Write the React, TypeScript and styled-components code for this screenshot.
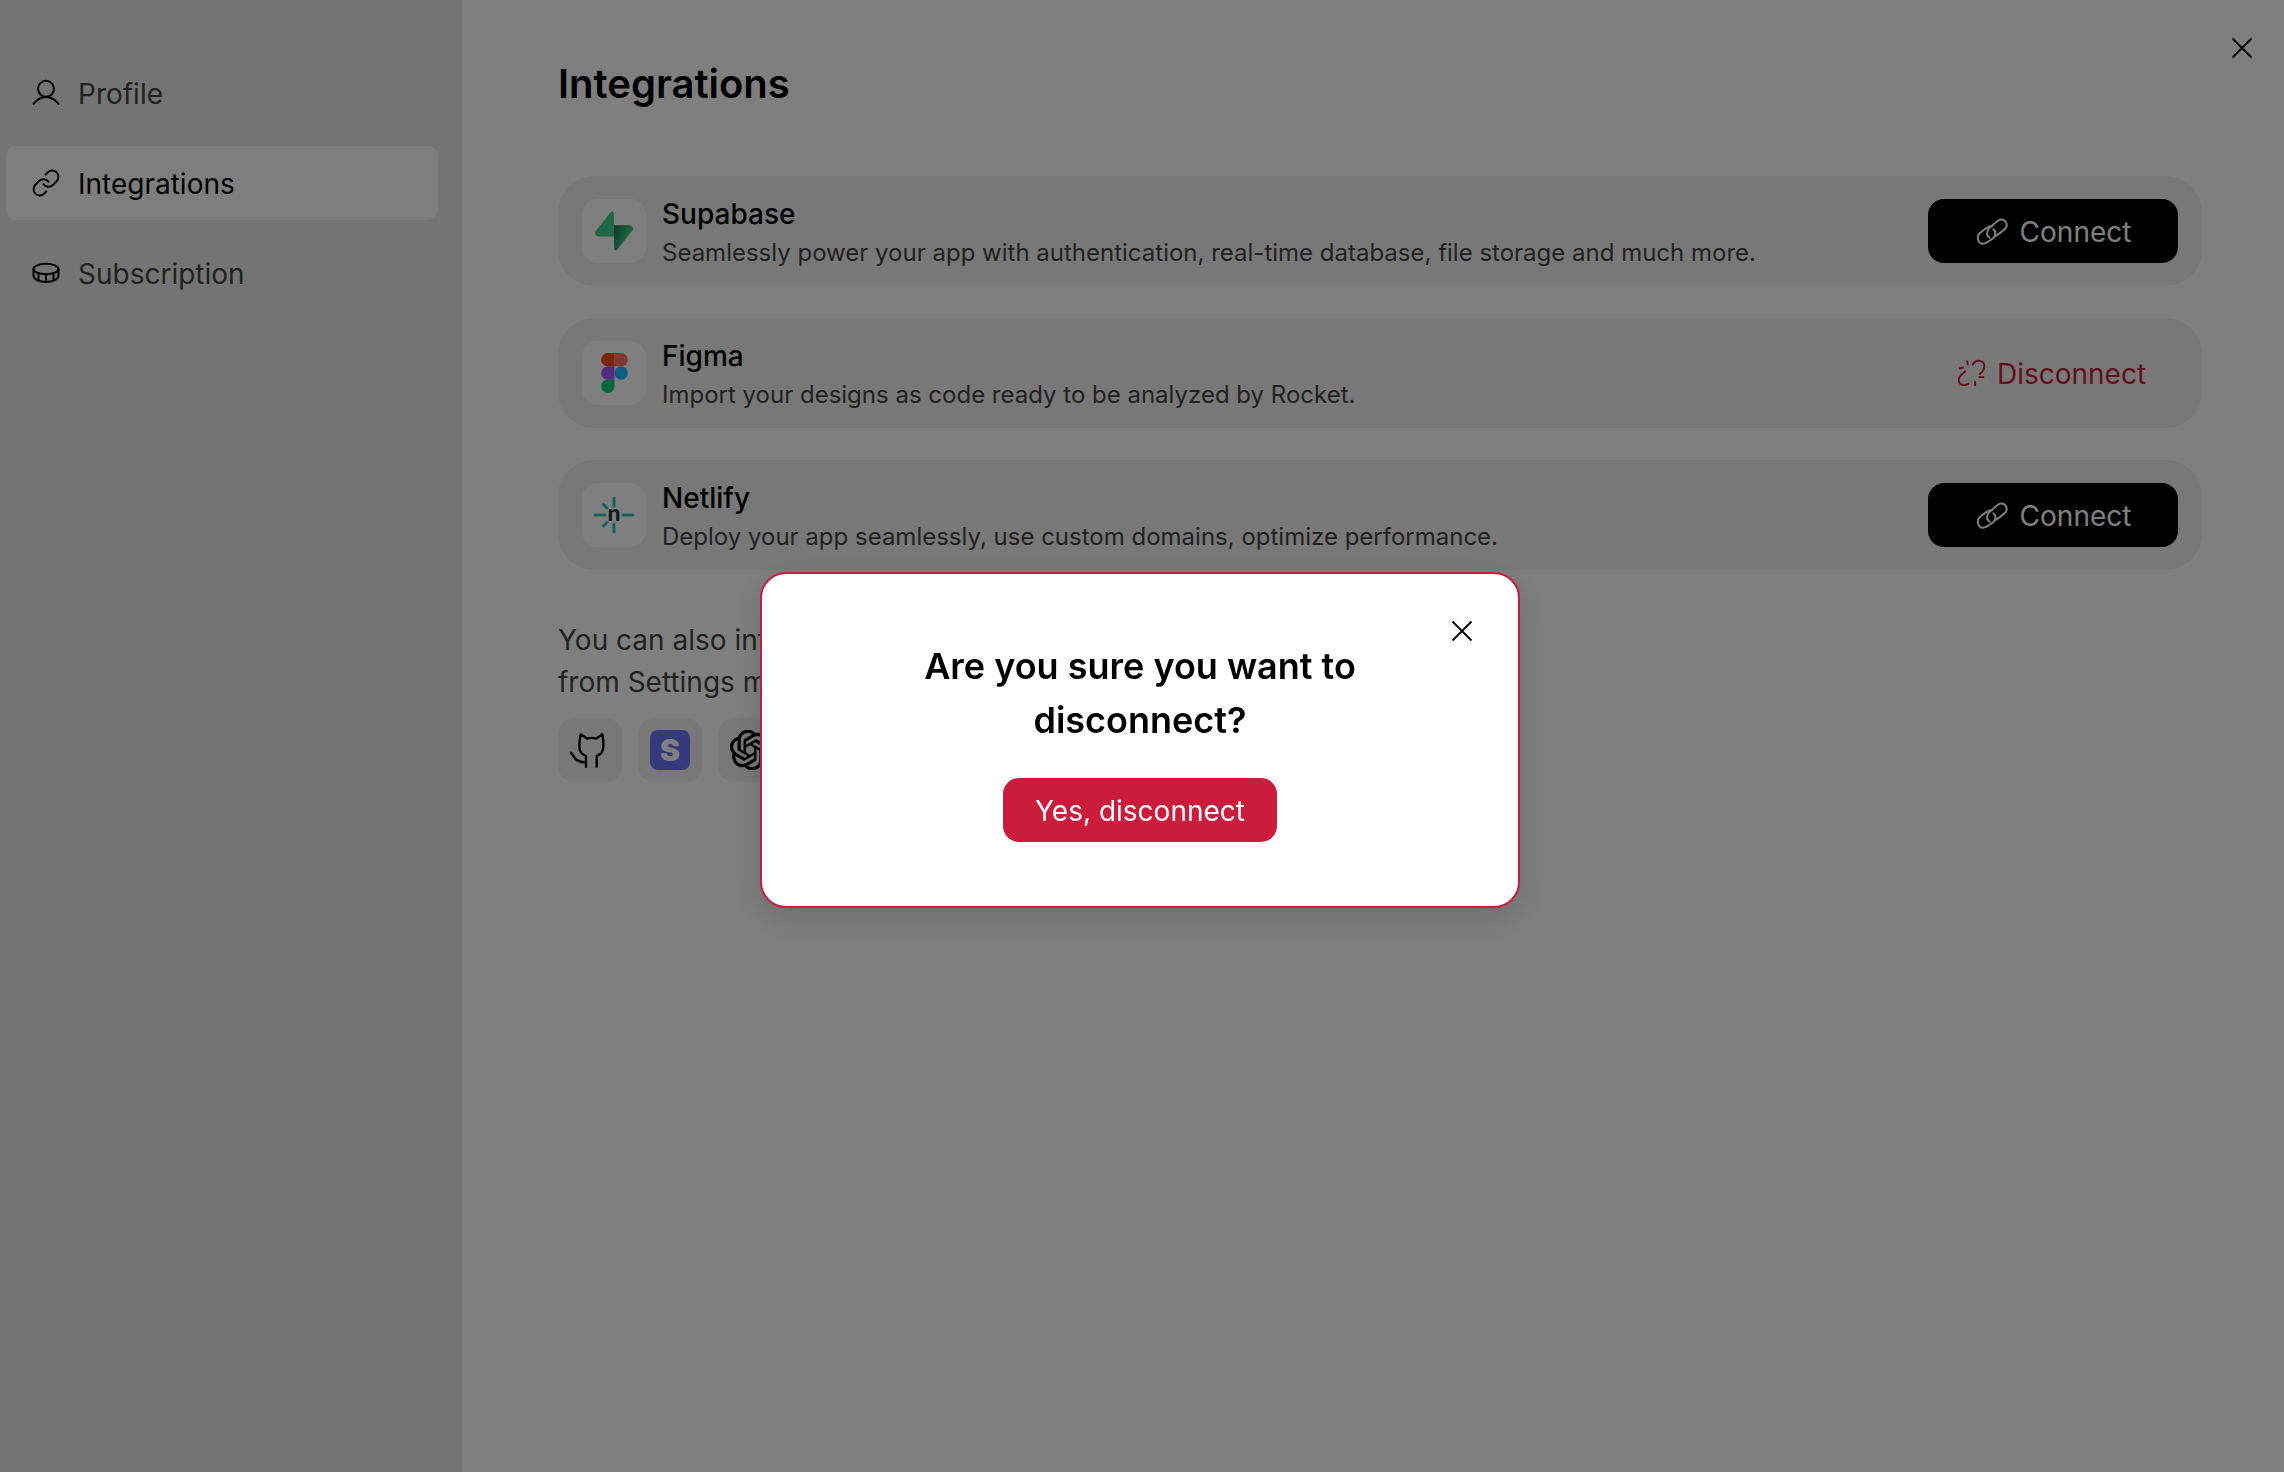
import React from 'react';
import styled, { createGlobalStyle } from 'styled-components';
import { SiOpenai } from 'react-icons/si';

const GlobalStyle = createGlobalStyle`
  html, body {
    margin: 0;
    padding: 0;
    background: #ffffff;
    font-family: Inter, "Liberation Sans", sans-serif;
  }
  * { box-sizing: border-box; }
`;

const Page = styled.div`
  display: flex;
  min-height: 100vh;
  background: #ffffff;
`;

const Sidebar = styled.aside`
  width: 462px;
  flex-shrink: 0;
  background: #e9e9e9;
  padding: 56px 24px 0 6px;
  display: flex;
  flex-direction: column;
  gap: 16px;
`;

const NavItem = styled.div<{ $active?: boolean }>`
  height: 74px;
  border-radius: 10px;
  padding-left: 25px;
  display: flex;
  align-items: center;
  gap: 17px;
  font-size: 28px;
  color: ${p => (p.$active ? '#000000' : '#454545')};
  background: ${p => (p.$active ? '#fdfdfd' : 'transparent')};
`;

const NavLabel = styled.span`
  padding-top: 1px;
`;

const NavIcon = styled.svg<{ $weight?: number }>`
  width: 30px;
  height: 30px;
  flex-shrink: 0;
  fill: none;
  stroke: #000000;
  stroke-width: ${p => p.$weight || 2};
  stroke-linecap: round;
  stroke-linejoin: round;
`;

const Main = styled.main`
  flex: 1;
  padding: 60px 82px 0 96px;
`;

const Title = styled.h1`
  margin: 0 0 68px;
  font-size: 40px;
  line-height: 48px;
  font-weight: 600;
  color: #000000;
`;

const CardList = styled.div`
  display: flex;
  flex-direction: column;
  gap: 32px;
`;

const Card = styled.div`
  height: 110px;
  border-radius: 36px;
  background: #f0f0f0;
  padding: 0 24px;
  display: flex;
  align-items: center;
  gap: 16px;
`;

const Tile = styled.div<{ $bg?: string }>`
  width: 64px;
  height: 64px;
  flex-shrink: 0;
  border-radius: 16px;
  background: ${p => p.$bg || '#ffffff'};
  display: flex;
  align-items: center;
  justify-content: center;
  overflow: hidden;
`;

const CardText = styled.div`
  flex: 1;
  min-width: 0;
  padding-top: 1px;
`;

const CardName = styled.div`
  font-size: 28px;
  line-height: 42px;
  font-weight: 500;
  color: #000000;
`;

const CardDesc = styled.div`
  font-size: 24px;
  line-height: 36px;
  color: #454545;
`;

const ActionButton = styled.button<{ $danger?: boolean }>`
  width: 250px;
  height: 64px;
  border: none;
  border-radius: 16px;
  flex-shrink: 0;
  display: flex;
  align-items: center;
  justify-content: center;
  gap: 11px;
  padding: 1px ${p => (p.$danger ? '3px' : '0')} 0 0;
  font-family: inherit;
  font-size: 28px;
  background: ${p => (p.$danger ? 'transparent' : '#000000')};
  color: ${p => (p.$danger ? '#cc1c3b' : '#ffffff')};
`;

const ChainIcon = styled.svg`
  width: 33px;
  height: 29px;
  margin-left: 1px;
  fill: none;
  stroke: currentColor;
  stroke-width: 6;
  stroke-linecap: round;
`;

const BrokenLink = styled.svg`
  width: 29px;
  height: 29px;
  fill: none;
  stroke: currentColor;
  stroke-width: 6;
  stroke-linecap: round;
`;

const Note = styled.p`
  margin: 49px 0 15px;
  font-size: 28px;
  line-height: 42px;
  color: #454545;
`;

const ServiceRow = styled.div`
  display: flex;
  gap: 16px;
`;

const StripeBadge = styled.span`
  width: 40px;
  height: 40px;
  border-radius: 8px;
  background: #6e73fa;
  color: #ffffff;
  font-size: 30px;
  font-weight: 900;
  display: flex;
  align-items: center;
  justify-content: center;
`;

const CloseGlyph = styled.svg`
  display: block;
  width: 22px;
  height: 22px;
  stroke: #000000;
  stroke-width: 1.8;
  fill: none;
`;

const PageClose = styled.div`
  position: absolute;
  top: 37px;
  right: 31px;
`;

const Overlay = styled.div`
  position: fixed;
  inset: 0;
  background: rgba(0, 0, 0, 0.5);
  display: flex;
  align-items: center;
  justify-content: center;
  padding: 7px 4px 0 0;
`;

const Modal = styled.div`
  position: relative;
  width: 760px;
  height: 336px;
  background: #ffffff;
  border: 2px solid #cc1c3b;
  border-radius: 26px;
  box-shadow: 0 10px 30px rgba(0, 0, 0, 0.15);
  padding-top: 65px;
  display: flex;
  flex-direction: column;
  align-items: center;
`;

const ModalClose = styled.div`
  position: absolute;
  top: 46px;
  right: 45px;
`;

const ModalTitle = styled.h2`
  margin: 0 0 31px;
  max-width: 500px;
  font-size: 36px;
  line-height: 54px;
  font-weight: 600;
  text-align: center;
  color: #000000;
`;

const ConfirmButton = styled.button`
  width: 274px;
  height: 64px;
  border: none;
  border-radius: 16px;
  padding: 2px 0 0;
  background: #cc1c3b;
  color: #ffffff;
  font-family: inherit;
  font-size: 28px;
`;

function CloseIcon() {
  return (
    <CloseGlyph viewBox="0 0 22 22">
      <path d="M1.500 1.500l19 19M20.500 1.500l-19 19" />
    </CloseGlyph>
  );
}

function SupabaseLogo() {
  return (
    <svg width="38" height="40" viewBox="0 0 109 113">
      <defs>
        <linearGradient id="supa" x1="54" y1="55" x2="99" y2="74" gradientUnits="userSpaceOnUse">
          <stop offset="0" stopColor="#1f7a50" />
          <stop offset="1" stopColor="#3ecf8e" />
        </linearGradient>
      </defs>
      <path d="M63.7076 110.284C60.8481 113.885 55.0502 111.912 54.9813 107.314L53.9738 40.0627L99.1935 40.0627C107.384 40.0627 111.952 49.5228 106.859 55.9374L63.7076 110.284Z" fill="url(#supa)" />
      <path d="M45.317 2.07103C48.1765 -1.53037 53.9745 0.442937 54.0434 5.041L54.4849 72.2922H9.83113C1.64038 72.2922 -2.92775 62.8321 2.1655 56.4175L45.317 2.07103Z" fill="#3ecf8e" />
    </svg>
  );
}

function FigmaLogo() {
  return (
    <svg width="27" height="40" viewBox="0 0 38 57">
      <path d="M19 28.5a9.5 9.5 0 1 1 19 0 9.5 9.5 0 0 1-19 0z" fill="#1abcfe" />
      <path d="M0 47.5A9.5 9.5 0 0 1 9.5 38H19v9.5a9.5 9.5 0 1 1-19 0z" fill="#0acf83" />
      <path d="M19 0v19h9.5a9.5 9.5 0 1 0 0-19H19z" fill="#ff7262" />
      <path d="M0 9.5A9.5 9.5 0 0 0 9.5 19H19V0H9.5A9.5 9.5 0 0 0 0 9.5z" fill="#f24e1e" />
      <path d="M0 28.5A9.5 9.5 0 0 0 9.5 38H19V19H9.5A9.5 9.5 0 0 0 0 28.5z" fill="#a259ff" />
    </svg>
  );
}

function NetlifyLogo() {
  return (
    <svg width="42" height="42" viewBox="0 0 42 42" fill="none">
      <path
        d="M21 4v8M21 30v8M2 21h10M30 21h10M10.500 10.500l3.500 3.500M10.500 32l3.500-3.500"
        stroke="#2cc4b8"
        strokeWidth="3"
        strokeLinecap="round"
      />
      <text x="21" y="26.700" textAnchor="middle" fontFamily="Inter" fontSize="21" fontWeight="700" fill="#0e3b3c">n</text>
    </svg>
  );
}

function GithubCat() {
  return (
    <svg width="40" height="40" viewBox="60 390 120 120" fill="none" stroke="#000000" strokeWidth="7" strokeLinecap="round" strokeLinejoin="round">
      <path d="M108 500V468C96 464 88 454 88 438C88 426 90 414 92 403L112 416C122 413 130 413 138 416L157 403C159 414 161 426 160 438C160 454 152 464 140 468V500" />
      <path d="M62 458C72 462 70 487 106 487" />
    </svg>
  );
}

function ChainLink() {
  return (
    <ChainIcon viewBox="20 25 98 88">
      <path d="M68 52C55 53 40 65 30 74C20 84 24 106 40 106C50 106 62 96 70 90C80 82 80 68 72 62" />
      <path d="M60 88C50 82 50 68 60 58C70 50 80 38 92 33C108 30 118 48 108 60C100 68 90 76 76 84" />
    </ChainIcon>
  );
}

function UnlinkIcon() {
  return (
    <BrokenLink viewBox="20 25 88 88">
      <path d="M68 42C72 33 80 30 85 30C95 30 103 36 103 46C103 56 97 64 90 70" />
      <path d="M45 62L30 76C24 84 24 95 30 100C37 106 46 105 55 100" />
      <path d="M51 32L53 42M28 54L38 51M88 80H100M75 95V105" />
    </BrokenLink>
  );
}

const integrations = [
  { name: 'Supabase', desc: 'Seamlessly power your app with authentication, real-time database, file storage and much more.', logo: <SupabaseLogo /> },
  { name: 'Figma', desc: 'Import your designs as code ready to be analyzed by Rocket.', logo: <FigmaLogo />, connected: true },
  { name: 'Netlify', desc: 'Deploy your app seamlessly, use custom domains, optimize performance.', logo: <NetlifyLogo /> },
];

function App() {
  return (
    <>
      <GlobalStyle />
      <Page>
        <Sidebar>
          <NavItem>
            <NavIcon viewBox="0 0 30 30">
              <circle cx="15" cy="10.800" r="8" />
              <path d="M2.500 26C6 21.500 10 19 15 19S24 21.500 27.500 26" />
            </NavIcon>
            <NavLabel>Profile</NavLabel>
          </NavItem>
          <NavItem $active>
            <NavIcon viewBox="0 0 24 24" $weight={1.6}>
              <path d="M10 13a5 5 0 0 0 7.54.54l3-3a5 5 0 0 0-7.07-7.07l-1.72 1.71" />
              <path d="M14 11a5 5 0 0 0-7.54-.54l-3 3a5 5 0 0 0 7.07 7.07l1.71-1.71" />
            </NavIcon>
            <NavLabel>Integrations</NavLabel>
          </NavItem>
          <NavItem>
            <NavIcon viewBox="0 0 30 30">
              <ellipse cx="15" cy="11" rx="12.500" ry="5.200" />
              <path d="M2.500 11V17.500C2.500 21 8 24 15 24S27.500 21 27.500 17.500V11" />
              <path d="M7.500 15.500V22.500M15 16.500V24M22.500 15.500V22.500" />
            </NavIcon>
            <NavLabel>Subscription</NavLabel>
          </NavItem>
        </Sidebar>
        <Main>
          <Title>Integrations</Title>
          <CardList>
            {integrations.map(item => (
              <Card key={item.name}>
                <Tile>{item.logo}</Tile>
                <CardText>
                  <CardName>{item.name}</CardName>
                  <CardDesc>{item.desc}</CardDesc>
                </CardText>
                {item.connected ? (
                  <ActionButton $danger><UnlinkIcon />Disconnect</ActionButton>
                ) : (
                  <ActionButton><ChainLink />Connect</ActionButton>
                )}
              </Card>
            ))}
          </CardList>
          <Note>
            You can also integrate GitHub, Stripe and OpenAI<br />
            from Settings menu
          </Note>
          <ServiceRow>
            <Tile $bg="#f0f0f0"><GithubCat /></Tile>
            <Tile $bg="#f0f0f0"><StripeBadge>S</StripeBadge></Tile>
            <Tile $bg="#f0f0f0"><SiOpenai size={40} color="#000000" stroke="#000000" strokeWidth={0.35} /></Tile>
          </ServiceRow>
        </Main>
        <PageClose><CloseIcon /></PageClose>
      </Page>
      <Overlay>
        <Modal>
          <ModalClose><CloseIcon /></ModalClose>
          <ModalTitle>Are you sure you want to disconnect?</ModalTitle>
          <ConfirmButton>Yes, disconnect</ConfirmButton>
        </Modal>
      </Overlay>
    </>
  );
}

export default App;
